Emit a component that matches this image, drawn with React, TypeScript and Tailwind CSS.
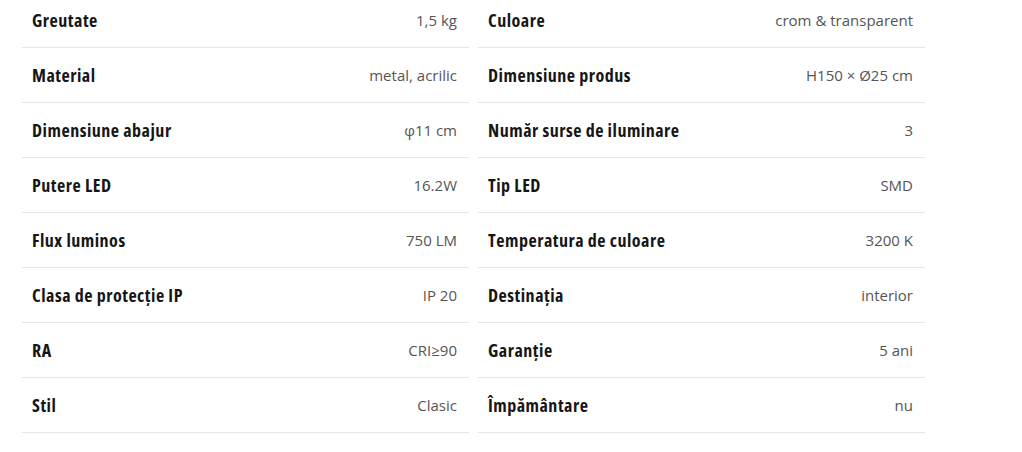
import React from "react";

interface SpecRow {
  label: string;
  value: string;
}

const leftSpecs: SpecRow[] = [
  { label: "Greutate", value: "1,5 kg" },
  { label: "Material", value: "metal, acrilic" },
  { label: "Dimensiune abajur", value: "φ11 cm" },
  { label: "Putere LED", value: "16.2W" },
  { label: "Flux luminos", value: "750 LM" },
  { label: "Clasa de protecție IP", value: "IP 20" },
  { label: "RA", value: "CRI≥90" },
  { label: "Stil", value: "Clasic" },
];

const rightSpecs: SpecRow[] = [
  { label: "Culoare", value: "crom & transparent" },
  { label: "Dimensiune produs", value: "H150 × Ø25 cm" },
  { label: "Număr surse de iluminare", value: "3" },
  { label: "Tip LED", value: "SMD" },
  { label: "Temperatura de culoare", value: "3200 K" },
  { label: "Destinația", value: "interior" },
  { label: "Garanție", value: "5 ani" },
  { label: "Împământare", value: "nu" },
];

const SpecTable: React.FC<{ rows: SpecRow[] }> = ({ rows }) => {
  return (
    <div className="flex flex-col">
      {rows.map((row) => (
        <div
          key={row.label}
          className="flex h-[55px] items-center justify-between border-b border-[#e6e6e6] pl-[10px] pr-[12px]"
        >
          <span className="font-['Open_Sans',sans-serif] text-[18px] font-bold font-stretch-condensed tracking-[0.5px] text-[#161616]">
            {row.label}
          </span>
          <span className="font-['Open_Sans',sans-serif] text-[15px] text-[#555555]">
            {row.value}
          </span>
        </div>
      ))}
    </div>
  );
};

export default function App() {
  return (
    <div className="h-[452px] w-[1022px] overflow-hidden bg-white">
      {/* specs grid, scrolled a little past the top */}
      <div className="-mt-[7px] ml-[22px] grid w-[903px] grid-cols-2 gap-x-[9px]">
        <SpecTable rows={leftSpecs} />
        <SpecTable rows={rightSpecs} />
      </div>
    </div>
  );
}
